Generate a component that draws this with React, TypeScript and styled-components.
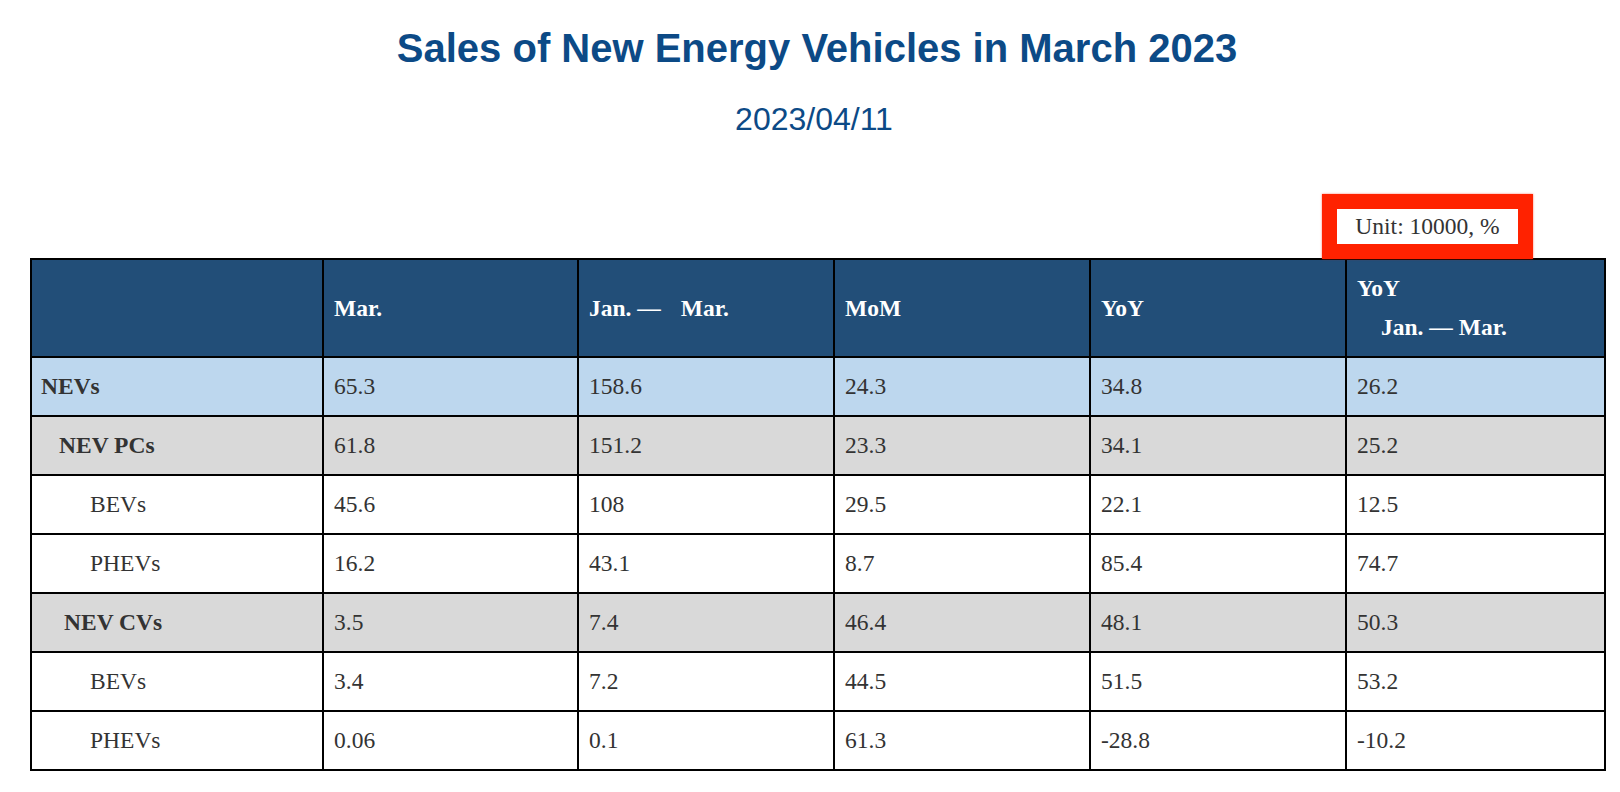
import React from "react";
import styled, { createGlobalStyle } from "styled-components";

const GlobalStyle = createGlobalStyle`
  html, body {
    margin: 0;
    padding: 0;
    background: #ffffff;
  }
`;

const Page = styled.div`
  width: 1620px;
  padding: 0 16px 0 30px;
  box-sizing: border-box;
`;

const Title = styled.h1`
  margin: 0;
  padding-top: 26px;
  text-align: center;
  font-family: "Liberation Sans", Arial, sans-serif;
  font-size: 40px;
  line-height: 44px;
  font-weight: 700;
  color: #0c4a86;
`;

const DateLine = styled.p`
  margin: 31px 0 0;
  padding-right: 6px;
  text-align: center;
  font-family: "Liberation Sans", Arial, sans-serif;
  font-size: 32px;
  line-height: 36px;
  color: #0c4a86;
`;

const UnitRow = styled.div`
  display: flex;
  justify-content: flex-end;
  margin-top: 57px;
  padding-right: 71px;
  margin-bottom: -1px;
`;

const UnitMark = styled.div`
  border: 15px solid #ff2200;
  box-shadow: 0 0 2px rgba(255, 34, 0, 0.6);
  background: #ffffff;
  width: 181px;
  height: 35px;
  display: flex;
  align-items: center;
  justify-content: center;
  font-family: "Liberation Serif", "Times New Roman", serif;
  font-size: 23.5px;
  color: #333333;
`;

const Table = styled.table`
  width: 1574px;
  border-collapse: collapse;
  table-layout: fixed;
  border: 2px solid #000000;
  font-family: "Liberation Serif", "Times New Roman", serif;
  font-size: 23.5px;
  color: #333333;
`;

const HeadCell = styled.th`
  height: 96px;
  padding: 0 10px;
  background: #224e78;
  border: 2px solid #000000;
  color: #ffffff;
  font-weight: 700;
  text-align: left;
  vertical-align: middle;
  line-height: 39px;
  white-space: nowrap;
`;

const SubLine = styled.span`
  display: block;
  padding-left: 24px;
`;

const tones = {
  total: "#bdd7ee",
  group: "#d9d9d9",
  item: "#ffffff",
};

type Tone = keyof typeof tones;

const Row = styled.tr<{ $tone: Tone }>`
  background: ${(p) => tones[p.$tone]};
`;

const Cell = styled.td<{ $indent?: number; $bold?: boolean }>`
  height: 57px;
  padding: 0 10px 0 ${(p) => 10 + (p.$indent ?? 0)}px;
  border: 2px solid #000000;
  font-weight: ${(p) => (p.$bold ? 700 : 400)};
  vertical-align: middle;
  white-space: nowrap;
`;

const Wide = styled.span`
  margin-left: 20px;
`;

type Entry = {
  label: string;
  tone: Tone;
  indent: number;
  values: string[];
};

const rows: Entry[] = [
  { label: "NEVs", tone: "total", indent: -1, values: ["65.3", "158.6", "24.3", "34.8", "26.2"] },
  { label: "NEV PCs", tone: "group", indent: 17, values: ["61.8", "151.2", "23.3", "34.1", "25.2"] },
  { label: "BEVs", tone: "item", indent: 48, values: ["45.6", "108", "29.5", "22.1", "12.5"] },
  { label: "PHEVs", tone: "item", indent: 48, values: ["16.2", "43.1", "8.7", "85.4", "74.7"] },
  { label: "NEV CVs", tone: "group", indent: 22, values: ["3.5", "7.4", "46.4", "48.1", "50.3"] },
  { label: "BEVs", tone: "item", indent: 48, values: ["3.4", "7.2", "44.5", "51.5", "53.2"] },
  { label: "PHEVs", tone: "item", indent: 48, values: ["0.06", "0.1", "61.3", "-28.8", "-10.2"] },
];

export default function App() {
  return (
    <>
      <GlobalStyle />
      <Page>
        <Title>Sales of New Energy Vehicles in March 2023</Title>
        <DateLine>2023/04/11</DateLine>
        <UnitRow>
          <UnitMark>Unit: 10000, %</UnitMark>
        </UnitRow>
        <Table>
          <colgroup>
            <col style={{ width: 292 }} />
            <col style={{ width: 255 }} />
            <col style={{ width: 256 }} />
            <col style={{ width: 256 }} />
            <col style={{ width: 256 }} />
            <col style={{ width: 259 }} />
          </colgroup>
          <thead>
            <tr>
              <HeadCell />
              <HeadCell>Mar.</HeadCell>
              <HeadCell>
                Jan. —<Wide>Mar.</Wide>
              </HeadCell>
              <HeadCell>MoM</HeadCell>
              <HeadCell>YoY</HeadCell>
              <HeadCell>
                YoY
                <SubLine>Jan. — Mar.</SubLine>
              </HeadCell>
            </tr>
          </thead>
          <tbody>
            {rows.map((r, i) => (
              <Row key={i} $tone={r.tone}>
                <Cell $indent={r.indent} $bold={r.tone !== "item"}>
                  {r.label}
                </Cell>
                {r.values.map((v, j) => (
                  <Cell key={j}>{v}</Cell>
                ))}
              </Row>
            ))}
          </tbody>
        </Table>
      </Page>
    </>
  );
}
